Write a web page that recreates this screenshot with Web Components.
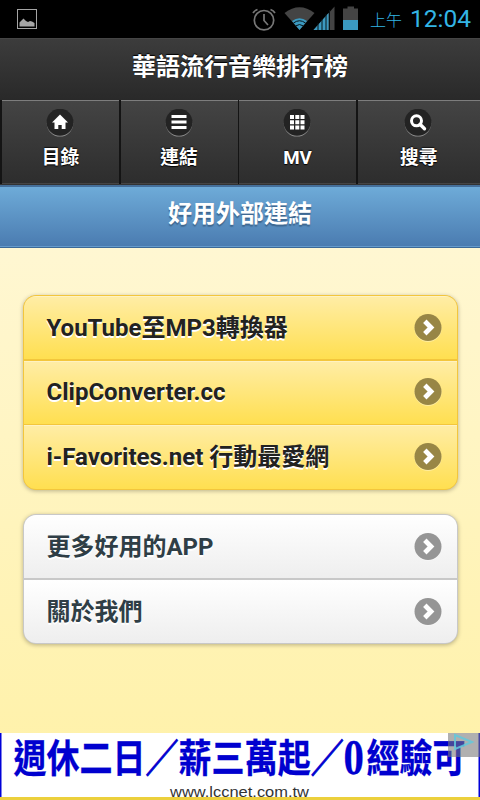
<!DOCTYPE html>
<html lang="zh-Hant">
<head>
<meta charset="utf-8">
<title>華語流行音樂排行榜</title>
<style>
html,body{margin:0;padding:0}
body{width:480px;height:800px;overflow:hidden;font-family:Roboto,"Noto Sans CJK TC",sans-serif}
</style>
</head>
<body>
<music-app></music-app>
<script>
const define=(name,html)=>customElements.define(name,class extends HTMLElement{
  constructor(){
    super();
    this.attachShadow({mode:'open'}).innerHTML=typeof html==='function'?html(this):html;
  }
});

define('status-bar',`<style>
:host{display:flex;height:38px;background:#000;color:#33b5e5;align-items:flex-start}
svg{display:block;flex:none}
.sp{flex:1}
.ap{font-size:16px;line-height:20px;margin:11px 0 0 11px;width:33px;white-space:nowrap;font-weight:300}
.t{font-size:24.500px;line-height:30px;margin:4px 9px 0 7px;width:61px;white-space:nowrap}
</style>
<svg width="60" height="38"><rect x="17.5" y="9.5" width="19" height="19" fill="none" stroke="#a5a5a5"/><path d="M19.5 26.500V22.500L21.500 20.500L23.500 18.500L26 21L28 22L30 21L32 21.500L34.500 23V26.500Z" fill="#a5a5a5"/></svg>
<span class="sp"></span>
<svg width="108" height="38" viewBox="251.500 0 108 38">
<g fill="none" stroke="#777" stroke-width="1.700"><circle cx="264.500" cy="20.200" r="9.700"/><path d="M264.500 14V20.500L268.500 25M253.500 13Q255 10.500 258 9.500M271 9.500Q274 10.500 275.500 13"/></g>
<path d="M285 13Q300 1.500 315 13L300 30Z" fill="#444"/>
<path d="M292.500 21Q300 15.500 307.500 21L300 30Z" fill="#3b99c0"/><path d="M294 23Q300 18.500 306 23M296 26Q300 23 304 26" fill="none" stroke="#071419" stroke-width="1"/>
<path d="M314 30L335 6.500V30Z" fill="#444"/><path d="M314 30L329 13V30Z" fill="#3b99c0"/><path d="M318.500 23V30M322.500 19V30M326.500 14V30M330 10V30" stroke="#071419"/>
<path d="M343.500 8.500H348V6.500H354.500V8.500H358.500V30H343.500Z" fill="#444"/><path d="M343.500 20H358.500V30H343.500Z" fill="#3b99c0"/>
</svg>
<span class="ap">上午</span><span class="t">12:04</span>`);

define('page-title',`<style>
:host{display:block;box-sizing:border-box;height:62px;padding-top:13px;text-align:center;color:#fff;font-weight:700;font-size:24px;line-height:30px;background:linear-gradient(#3c3c3c,#292929);text-shadow:0 -1px 1px #000;border-top:1px solid #454545}
</style><slot></slot>`);

const icons={
home:'<path d="M14 5.500L22 13.500H19.500V20H15.700V16H12.300V20H8.500V13.500H6Z"/>',
bars:'<path d="M6.500 6H21.500V9H6.500ZM6.500 11.500H21.500V14.500H6.500ZM6.500 17H21.500V20H6.500Z"/>',
grid:'<path d="M7 6h4v4H7zM12.300 6h4v4h-4zM17.500 6h4v4h-4zM7 11.300h4v4H7zM12.300 11.300h4v4h-4zM17.500 11.300h4v4h-4zM7 16.500h4v4H7zM12.300 16.500h4v4h-4zM17.500 16.500h4v4h-4z"/>',
search:'<circle cx="12.500" cy="11.800" r="5" fill="none" stroke="#fff" stroke-width="3"/><path d="M16 15.300L20.500 19.800" stroke="#fff" stroke-width="3.400" fill="none" stroke-linecap="round"/>'
};
define('nav-item',el=>`<style>
:host{display:flex;flex-direction:column;align-items:center;box-sizing:border-box;padding-top:8px;height:84px;border-top:1px solid #7d7d7d;border-bottom:1px solid #454545;background:linear-gradient(#444,#2d2d2d);color:#fff;font-weight:700;font-size:18.75px;line-height:24px;text-shadow:0 1px 1px #000,0 -1px 1px #111}
svg{display:block;margin:0 1px 8px 0}
</style><svg width="28" height="29" fill="#fff"><circle cx="14" cy="14.300" r="13.300" fill="#909090"/><circle cx="14" cy="13.200" r="13.500" fill="#232323"/>${icons[el.getAttribute('icon')]}</svg><slot></slot>`);

define('nav-bar',`<style>
:host{display:grid;box-sizing:border-box;height:85px;grid-template-columns:117px 117px 117px 1fr;column-gap:1.500px;padding-left:2px;background:#141414;border-bottom:1px solid #333}
</style><slot></slot>`);

define('section-title',`<style>
:host{display:block;box-sizing:border-box;height:63px;padding-top:12px;text-align:center;color:#fff;font-weight:700;font-size:24px;line-height:30px;border-top:2px solid #456f9a;border-bottom:1px solid #3b6998;background:linear-gradient(#6eabd8,#4a7bb0);box-shadow:inset 0 -1px #649acb;text-shadow:0 2px 1px #3e6790}
</style><slot></slot>`);

define('link-row',`<style>
:host{display:flex;box-sizing:border-box;align-items:center;justify-content:space-between;padding:0 15px 0 22.500px;font-weight:700;font-size:24px;line-height:30px;color:var(--ink);background:linear-gradient(var(--hi),var(--lo));text-shadow:0 1.500px 0 #fff;box-shadow:inset 0 1px rgba(255,255,255,.3)}
span{white-space:nowrap}svg{display:block}
</style><span><slot></slot></span>
<svg width="28" height="30"><circle cx="14" cy="15.500" r="13.500" fill="#fff" opacity=".35"/><circle cx="14" cy="14.500" r="13.500" fill="var(--dot)"/><path d="M10.800 8.300L17 14.500L10.800 20.700" fill="none" stroke="#fff" stroke-width="4.800"/></svg>`);

define('link-list',`<style>
:host{display:grid;box-sizing:border-box;width:434.500px;margin-left:23px;border:1px solid var(--line);border-radius:13px;overflow:hidden;background:var(--line);box-shadow:0 1px 4px rgba(0,0,0,.28)}
:host([tone=gold]){height:195px;grid-template-rows:63px 63px 64px;row-gap:1.500px;--line:#f3c63c;--hi:#ffeda6;--lo:#ffdf50;--ink:#222;--dot:#988645}
:host([tone=light]){height:130px;grid-template-rows:63px 63px;row-gap:2px;--line:#c8c8c8;--hi:#fff;--lo:#eee;--ink:#2f3e46;--dot:#959595}
</style><slot></slot>`);

define('ad-banner',`<style>
:host{display:block;box-sizing:border-box;height:67px;border-bottom:3px solid #ecd03c;background:#fff}
svg{display:block;overflow:visible}
</style>
<svg width="480" height="64" viewBox="0 733 480 64">
<path d="M0 733H1.500V797H0ZM478.500 733H480V797H478.500Z" fill="#0000d8"/>
<g fill="#0000cf" stroke="#0000cf" stroke-width=".3" font-family="Noto Sans CJK TC,sans-serif" font-weight="700" font-size="39">
<text transform="translate(13.500 772) scale(.847 1)">週休二日<tspan stroke-width=".9">／</tspan>薪三萬起<tspan stroke-width=".9">／</tspan></text>
<text transform="translate(343.500 774) scale(.8 1)" font-family="Liberation Serif,serif" font-size="51">0</text>
<text transform="translate(366.500 772) scale(.847 1)">經驗可</text></g>
<text x="170" y="797" font-family="Liberation Sans,sans-serif" font-size="15" fill="#333" textLength="139" lengthAdjust="spacingAndGlyphs">www.lccnet.com.tw</text>
<rect x="448" y="733" width="32" height="24" fill="#777" opacity=".58"/>
<path d="M455 735L472 742L455 749Z" fill="none" stroke="#62c9dc" stroke-width="2" opacity=".85"/>
</svg>`);

define('music-app',`<style>
:host{display:flex;flex-direction:column;width:480px;height:800px;background:linear-gradient(#fff7d2 248px,#fff1a6 800px)}
main{flex:1;display:flex;flex-direction:column;gap:24px;padding-top:47px;box-sizing:border-box}
</style>
<status-bar></status-bar>
<page-title>華語流行音樂排行榜</page-title>
<nav-bar><nav-item icon="home">目錄</nav-item><nav-item icon="bars">連結</nav-item><nav-item icon="grid">MV</nav-item><nav-item icon="search">搜尋</nav-item></nav-bar>
<section-title>好用外部連結</section-title>
<main>
<link-list tone="gold"><link-row>YouTube至MP3轉換器</link-row><link-row>ClipConverter.cc</link-row><link-row>i-Favorites.net 行動最愛網</link-row></link-list>
<link-list tone="light"><link-row>更多好用的APP</link-row><link-row>關於我們</link-row></link-list>
</main>
<ad-banner></ad-banner>`);
</script>
</body>
</html>
